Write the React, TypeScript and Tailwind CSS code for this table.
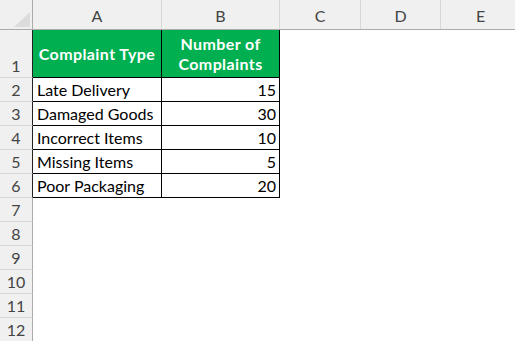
import React from "react";

const cols = [
  { key: "A", w: 129 },
  { key: "B", w: 118 },
  { key: "C", w: 81 },
  { key: "D", w: 80 },
  { key: "E", w: 80 },
];

const rows: [string, number][] = [
  ["Late Delivery", 15],
  ["Damaged Goods", 30],
  ["Incorrect Items", 10],
  ["Missing Items", 5],
  ["Poor Packaging", 20],
];

const font = { fontFamily: "Lato, 'Liberation Sans', sans-serif" };

function RowHead({ n, h, edge }: { n: number; h: string; edge?: boolean }) {
  return (
    <div
      className={`${h} w-[33px] shrink-0 bg-[#f0f0f0] border-r ${
        edge ? "border-r-[#222]" : "border-r-[#ababab]"
      } border-b border-b-[#d8d8d8] flex items-end justify-center pb-[1px] text-[16px] leading-[20px] text-[#444]`}
    >
      {n}
    </div>
  );
}

export default function App() {
  return (
    <div className="w-[515px] h-[341px] overflow-hidden bg-white" style={font}>
      {/* column headers */}
      <div className="flex h-[30px] bg-[#f0f0f0] border-b border-[#ababab]">
        <div className="w-[33px] shrink-0 border-r border-[#ababab] relative">
          <svg className="absolute left-0 top-0" width="33" height="29">
            <polygon points="14,27 30,27 30,12" fill="#dcdcdc" />
          </svg>
        </div>
        {cols.map((c) => (
          <div
            key={c.key}
            style={{ width: c.w }}
            className="shrink-0 border-r border-[#d8d8d8] flex items-end justify-center pb-[3px] text-[16px] leading-[20px] text-[#444]"
          >
            {c.key}
          </div>
        ))}
      </div>

      {/* row 1: header row of the table */}
      <div className="flex">
        <RowHead n={1} h="h-[48px]" edge />
        <div className="w-[129px] h-[48px] shrink-0 bg-[#00b050] border-b border-r border-black flex items-center justify-center text-white font-bold text-[16px] tracking-[0.4px]">
          Complaint Type
        </div>
        <div className="w-[118px] h-[48px] shrink-0 bg-[#00b050] border-b border-r border-black flex items-center justify-center text-center text-white font-bold text-[16px] leading-[20px] tracking-[0.4px]">
          Number of
          <br />
          Complaints
        </div>
      </div>

      {rows.map(([label, v], i) => (
        <div className="flex" key={label}>
          <RowHead n={i + 2} h="h-[24px]" edge />
          <div className="w-[129px] h-[24px] shrink-0 border-b border-r border-black flex items-end pl-[4px] pb-[1px] text-[16px] leading-[20px] text-black">
            {label}
          </div>
          <div className="w-[118px] h-[24px] shrink-0 border-b border-r border-black flex items-end justify-end pr-[3px] pb-[1px] text-[16px] leading-[20px] text-black">
            {v}
          </div>
        </div>
      ))}

      {[7, 8, 9, 10, 11, 12].map((n) => (
        <div className="flex" key={n}>
          <RowHead n={n} h="h-[24px]" />
        </div>
      ))}
    </div>
  );
}
